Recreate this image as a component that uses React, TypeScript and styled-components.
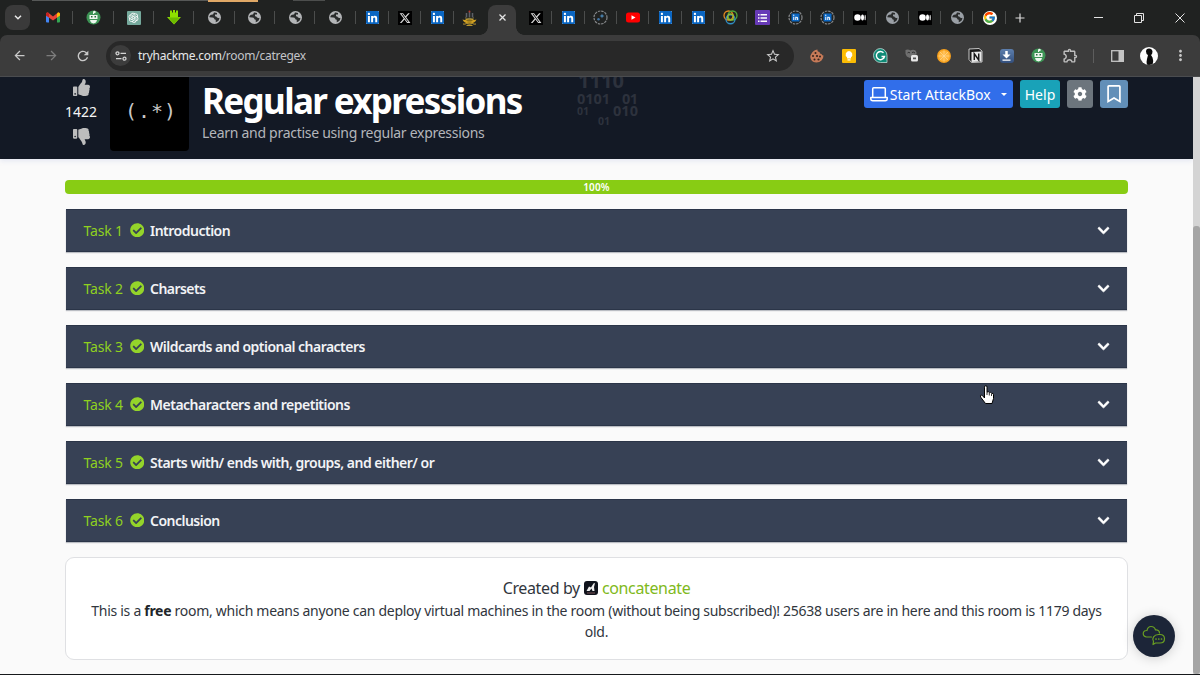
import React from "react";
import styled, { createGlobalStyle } from "styled-components";
import { FaThumbsUp, FaThumbsDown, FaCog, FaCheckCircle, FaChevronDown, FaLinkedin, FaRegBookmark } from "react-icons/fa";
import { FaXTwitter } from "react-icons/fa6";
import { FcGoogle } from "react-icons/fc";
import { AiOutlineOpenAI } from "react-icons/ai";
import { MdOutlineExtension, MdStarOutline, MdArrowBack, MdArrowForward, MdRefresh, MdMoreVert } from "react-icons/md";

const Global = createGlobalStyle`
  * { box-sizing: border-box; }
  html, body { margin: 0; padding: 0; overflow: hidden; background: #17191c; }
  body { font-family: "Noto Sans", "Open Sans", sans-serif; }
  svg { display: block; flex: none; }
`;

const Window = styled.div`
  width: 1200px;
  height: 675px;
  display: flex;
  flex-direction: column;
  background: #202221;
  border-bottom: 1px solid #17191c;
  overflow: hidden;
`;

/* ---------- browser chrome ---------- */

const BackEdge = styled.div`
  height: 2px;
  display: flex;
  flex: none;
`;

const EdgePiece = styled.div<{ $w: number; $c: string }>`
  width: ${(p) => p.$w}px;
  height: ${(p) => (p.$c === "#e0a866" ? 2 : 1)}px;
  background: ${(p) => p.$c};
`;

const TabStrip = styled.div`
  height: 33px;
  flex: none;
  display: flex;
  align-items: stretch;
  padding-left: 5px;
`;

const TabSearch = styled.div`
  width: 25px;
  height: 25px;
  margin: 3px 3px 0 0;
  border-radius: 8px;
  background: #3a3a3a;
  display: flex;
  align-items: center;
  justify-content: center;
`;

const TabGroup = styled.div<{ $shift?: number }>`
  display: flex;
  margin-left: ${(p) => p.$shift ?? 0}px;
`;

const Tab = styled.div<{ $wide?: boolean; $line?: boolean }>`
  width: ${(p) => (p.$wide ? 40.35 : 32.4)}px;
  height: 31px;
  flex: none;
  display: flex;
  align-items: center;
  justify-content: center;
  position: relative;
  &::after {
    content: "";
    display: ${(p) => (p.$line === false ? "none" : "block")};
    position: absolute;
    right: 0;
    top: 9px;
    width: 1px;
    height: 13px;
    background: #4b4d4c;
  }
`;

const ActiveTab = styled.div`
  width: 28px;
  height: 30px;
  margin: 3px 2.8px 0 2.2px;
  flex: none;
  border-radius: 8px 8px 0 0;
  background: #3c3c3c;
  display: flex;
  justify-content: center;
  padding-top: 8px;
  position: relative;
  &::before,
  &::after {
    content: "";
    position: absolute;
    bottom: 0;
    width: 8px;
    height: 8px;
  }
  &::before {
    left: -8px;
    background: radial-gradient(circle at 0 0, transparent 7.5px, #3c3c3c 8px);
  }
  &::after {
    right: -8px;
    background: radial-gradient(circle at 100% 0, transparent 7.5px, #3c3c3c 8px);
  }
`;

const Tile = styled.div<{ $bg: string; $size?: number; $r?: number }>`
  width: ${(p) => p.$size ?? 14}px;
  height: ${(p) => p.$size ?? 14}px;
  border-radius: ${(p) => p.$r ?? 0}px;
  background: ${(p) => p.$bg};
  color: #fff;
  display: flex;
  align-items: center;
  justify-content: center;
  overflow: hidden;
`;

const NewTab = styled.div`
  width: 28px;
  height: 31px;
  display: flex;
  align-items: center;
  justify-content: center;
`;

const WindowButtons = styled.div`
  margin-left: auto;
  display: flex;
  height: 31px;
`;

const WindowButton = styled.div`
  width: 40.5px;
  display: flex;
  align-items: center;
  justify-content: center;
`;

const Toolbar = styled.div`
  height: 42px;
  flex: none;
  display: flex;
  align-items: center;
  padding: 0 3px 0 4px;
  background: #3c3c3c;
  border-radius: 7px 7px 0 0;
  border-bottom: 1px solid #4a4b4c;
`;

const NavButton = styled.div<{ $dim?: boolean }>`
  width: 31.5px;
  display: flex;
  justify-content: center;
  color: ${(p) => (p.$dim ? "#7d7d7d" : "#c9c9c9")};
`;

const Omnibox = styled.div`
  width: 688px;
  height: 30px;
  margin: 0 7px 0 7.5px;
  border-radius: 15px;
  background: #282828;
  display: flex;
  align-items: center;
  padding: 0 13px 0 4px;
`;

const SiteInfo = styled.div`
  width: 21px;
  height: 21px;
  border-radius: 50%;
  background: #3c3c3c;
  display: flex;
  align-items: center;
  justify-content: center;
`;

const Url = styled.div`
  flex: 1;
  margin-left: 7px;
  font-size: 12px;
  line-height: 16px;
  letter-spacing: -0.27px;
  color: #c3c5c8;
  b { font-weight: 400; color: #e6e7e9; }
`;

const Extension = styled.div`
  width: 31.7px;
  display: flex;
  align-items: center;
  justify-content: center;
`;

const ToolbarLine = styled.div`
  width: 1px;
  height: 14px;
  margin: 0 7px;
  background: #5d5d5d;
`;

const Avatar = styled(Tile)`
  align-items: flex-end;
`;

/* ---------- page ---------- */

const Viewport = styled.div`
  flex: 1;
  min-height: 0;
  display: flex;
  background: #fafafa;
`;

const Page = styled.div`
  width: 1193px;
  display: flex;
  flex-direction: column;
`;

const Scrollbar = styled.div`
  width: 7px;
  background: #d4d4d4;
  padding-top: 149px;
`;

const Thumb = styled.div`
  height: 448px;
  border-radius: 3px;
  background: #a5a5a5;
`;

const RoomHeader = styled.header`
  height: 82px;
  flex: none;
  display: flex;
  align-items: flex-start;
  padding: 0 65px 0 65px;
  background: #131925;
  box-shadow: 0 2px 5px rgba(110, 130, 200, 0.15);
`;

const Votes = styled.div`
  width: 32px;
  padding-top: 2px;
  display: flex;
  flex-direction: column;
  align-items: center;
  color: #bdbdbd;
`;

const VoteCount = styled.div`
  font-size: 14px;
  line-height: 19px;
  margin: 6px 0 7px;
  color: #f5f5f5;
`;

const RoomLogo = styled.div`
  width: 79px;
  height: 74px;
  margin-left: 13px;
  padding-left: 3px;
  border-radius: 0 0 4px 4px;
  background: #000;
  color: #c8c8c8;
  font: 20px/68px "DejaVu Sans Mono", monospace;
  letter-spacing: 1px;
  text-align: center;
`;

const Heading = styled.div`
  width: 360px;
  margin-left: 13px;
`;

const Title = styled.h1`
  margin: 0;
  padding-top: 2px;
  font-size: 35px;
  line-height: 44px;
  font-weight: 700;
  letter-spacing: -1.65px;
  white-space: nowrap;
  color: #fff;
`;

const Subtitle = styled.div`
  font-size: 14px;
  line-height: 20px;
  letter-spacing: -0.28px;
  white-space: nowrap;
  color: #b3b6bb;
`;

const Binary = styled.svg`
  margin-left: 13px;
  font-family: "Open Sans", sans-serif;
  font-weight: 700;
  fill: #2d323d;
`;

const Actions = styled.div`
  margin-left: auto;
  padding-top: 3px;
  display: flex;
  gap: 7px;
`;

const Action = styled.button<{ $bg: string; $w: number }>`
  width: ${(p) => p.$w}px;
  height: 28px;
  border: 0;
  padding: 0;
  border-radius: 3px;
  background: ${(p) => p.$bg};
  color: #fff;
  font-family: inherit;
  font-size: 14px;
  display: flex;
  align-items: center;
  justify-content: center;
  gap: 2px;
`;

const Caret = styled.span`
  margin-left: 8px;
  border: 3.5px solid transparent;
  border-top-color: #fff;
  border-bottom: 0;
`;

const Content = styled.main`
  padding: 21px 65px 0;
  display: flex;
  flex-direction: column;
`;

const Progress = styled.div`
  height: 14px;
  margin-bottom: 15px;
  border-radius: 4px;
  background: #88cc14;
  color: #fff;
  font-size: 10px;
  line-height: 14px;
  font-weight: 600;
  letter-spacing: 0.15px;
  text-align: center;
`;

const Task = styled.section`
  height: 43px;
  margin: 0 1px 15px;
  padding: 0 17px 1px 17.5px;
  display: flex;
  align-items: center;
  background: #374155;
  border: 1px solid #2b3548;
  border-left: 0;
  border-right: 0;
  box-shadow: 0 1px 1px rgba(40, 50, 70, 0.3);
  font-size: 14px;
`;

const TaskNumber = styled.span`
  width: 46px;
  white-space: nowrap;
  letter-spacing: -0.15px;
  color: #8fd01f;
`;

const TaskTitle = styled.span<{ $track: number }>`
  flex: 1;
  margin-left: 6px;
  font-weight: 600;
  letter-spacing: ${(p) => p.$track}px;
  color: #f2f3f6;
`;

const Chevron = styled(FaChevronDown)`
  color: #fff;
  stroke: #fff;
  stroke-width: 24px;
`;

const Credits = styled.section`
  height: 103px;
  padding-top: 19px;
  background: #fff;
  border: 1px solid #dfe0e3;
  border-radius: 9px;
  text-align: center;
  color: #31363d;
`;

const Creator = styled.div`
  display: flex;
  align-items: center;
  justify-content: center;
  gap: 4px;
  margin-bottom: 1px;
  font-size: 16px;
  line-height: 22px;
  letter-spacing: -0.36px;
`;

const CreatorLink = styled.a`
  color: #7fb920;
`;

const CreditLine = styled.div<{ $track: number }>`
  font-size: 14px;
  line-height: 21px;
  white-space: nowrap;
  letter-spacing: ${(p) => p.$track}px;
  b { color: #212529; }
`;

const ChatButton = styled.div`
  position: absolute;
  left: 1133px;
  top: 614.5px;
  width: 42px;
  height: 42px;
  border-radius: 50%;
  background: #1c2538;
  box-shadow: 0 1px 12px rgba(0, 0, 0, 0.18);
  display: flex;
  align-items: center;
  justify-content: center;
`;

const Pointer = styled.svg`
  position: absolute;
  left: 978.5px;
  top: 385px;
`;

/* ---------- drawings ---------- */

const Gmail = () => (
  <svg width="14" height="11" viewBox="0 0 28 22">
    <path d="M0 3v16q0 2 2 2h4V8L0 3z" fill="#4285f4" />
    <path d="M28 3v16q0 2-2 2h-4V8l6-5z" fill="#34a853" />
    <path d="M0 4Q0 0 4 1l10 8L24 1q4-1 4 3v3L14 17 0 7z" fill="#ea4335" />
    <path d="M22 3l2-2q4-1 4 3v3l-6 4z" fill="#fbbc04" />
    <path d="M6 3L4 1Q0 0 0 4v3l6 4z" fill="#c5221f" />
  </svg>
);

const Robot = () => (
  <svg width="15" height="15" viewBox="0 0 30 30">
    <circle cx="15" cy="15" r="14" fill="#3d9455" />
    <path d="M14 3h2v5h-2zM7 10h16v8H7zM8 20h14q-1 6-7 7-6-1-7-7z" fill="#eef6ee" />
    <path d="M10 12h3v3h-3zM17 12h3v3h-3z" fill="#246b3a" />
    <circle cx="17" cy="4" r="2.4" fill="#eef6ee" />
  </svg>
);

const GreenArrow = () => (
  <svg width="14" height="15" viewBox="0 0 28 30">
    <path d="M6 1h4v4h2V0h4v5h2V1h4v13h6L14 29 0 14h6z" fill="#8ee000" />
    <path d="M3 15h22L14 28z" fill="#6dbb00" />
  </svg>
);

const Globe = ({ c = "#b4b6b8" }: { c?: string }) => (
  <svg width="13" height="13" viewBox="0 0 26 26">
    <circle cx="13" cy="13" r="13" fill={c} />
    <path d="M2.500 12.500q4 0 6 .5 3 0 4 2.500 0 2 3 2v5q7-2 7.500-9-3 1-5-.5-1-2.500-4-2.500V7h4V4q-3-1.600-6-1l-2 4H8.500L5 8q-2.300 2-2.500 4.500z" fill="#2a2c2c" />
    <path d="M10 18.500l2 4.500q-6 0-8.500-6z" fill={c} />
  </svg>
);

const Linked = () => (
  <Tile $bg="#fff" $size={13} $r={1}>
    <FaLinkedin size={15} color="#0a66c2" />
  </Tile>
);

const XMark = () => (
  <Tile $bg="#000">
    <FaXTwitter size={12} color="#d9d9d9" />
  </Tile>
);

const Ship = () => (
  <svg width="15" height="16" viewBox="0 0 30 32">
    <path d="M9 6v9M15 4v10M21 6v9" stroke="#5c6068" strokeWidth="3" />
    <circle cx="15" cy="3" r="2" fill="#b5382e" />
    <path d="M6 13l3 4 6-2 6 2 3-4-2 7H8z" fill="#8b7c3c" />
    <path d="M1 19q6 2 7-1l7 2 7-2q1 3 7 1-3 8-14 8T1 19z" fill="#d1a021" />
    <path d="M9 21h12M11 24h8" stroke="#5a4a14" strokeWidth="1.200" />
    <path d="M2 28q4 1 7-1 6 3 12 0 3 2 7 1M9 31h12" stroke="#e1b431" strokeWidth="1.600" fill="none" />
  </svg>
);

const Ring = ({ children }: { children: React.ReactNode }) => (
  <svg width="15" height="15" viewBox="0 0 30 30">
    <circle cx="15" cy="15" r="13" fill="none" stroke="#858789" strokeWidth="2.400" strokeDasharray="5 1.800" />
    {children}
  </svg>
);

const RingedLinked = () => (
  <Ring>
    <rect x="7" y="7" width="16" height="16" rx="1.500" fill="#0a66c2" />
    <path d="M11.500 13.500V20M15.500 20v-6.500M15.500 17q.5-2.500 2-2.500t1.700 2V20" stroke="#eaf2fa" strokeWidth="2.200" fill="none" />
    <circle cx="11.500" cy="10.500" r="1.400" fill="#eaf2fa" />
  </Ring>
);

const Spark = () => (
  <Ring>
    <path d="M18 7l1.300 3.700L23 12l-3.700 1.300L18 17l-1.300-3.700L13 12l3.700-1.300z" fill="#4d87b5" />
    <circle cx="11" cy="18.500" r="2.500" fill="#3f74a5" />
  </Ring>
);

const YouTube = () => (
  <svg width="14" height="11" viewBox="0 0 28 22">
    <rect y="1" width="28" height="20" rx="5" fill="#f00" />
    <path d="M11 6.500l8 4.500-8 4.500z" fill="#fff" />
  </svg>
);

const Rings = () => (
  <svg width="15" height="15" viewBox="0 0 30 30" fill="none" strokeWidth="2.600">
    <circle cx="11" cy="11" r="9" stroke="#e58a1f" />
    <circle cx="19" cy="11" r="9" stroke="#4fa83a" />
    <circle cx="15" cy="18.500" r="9" stroke="#2f8fc4" />
    <circle cx="15" cy="14" r="6" stroke="#9fb832" />
  </svg>
);

const FormList = () => (
  <Tile $bg="#673ab7" $size={15} $r={1}>
    <svg width="9" height="8" viewBox="0 0 9 8" fill="#fff">
      <path d="M0 0h1.500v1.500H0zM2.500 0H9v1.500H2.500zM0 3.200h1.500v1.500H0zM2.500 3.200H9v1.500H2.500zM0 6.400h1.500v1.500H0zM2.500 6.400H9v1.500H2.500z" />
    </svg>
  </Tile>
);

const Medium = () => (
  <Tile $bg="#000">
    <svg width="12" height="7" viewBox="0 0 24 14" fill="#fff">
      <circle cx="7" cy="7" r="6.500" />
      <ellipse cx="17" cy="7" rx="3" ry="6" />
      <ellipse cx="22.300" cy="7" rx="1.200" ry="5.500" />
    </svg>
  </Tile>
);

const Google = () => (
  <Tile $bg="#fff" $r={7}>
    <FcGoogle size={13} />
  </Tile>
);

const Cookie = () => (
  <svg width="14" height="14" viewBox="0 0 28 28">
    <path d="M15 1q-1 5 4 5 0 4 4 4 1 3 4 3 0 6-4 10T13 27Q5 27 2 21T2 11Q6 2 15 1z" fill="#c67a58" />
    <g fill="#33231d">
      <circle cx="11" cy="8" r="2" /><circle cx="6" cy="14" r="2" /><circle cx="14" cy="14" r="2.200" />
      <circle cx="9" cy="21" r="2" /><circle cx="20" cy="15" r="2" /><circle cx="17" cy="21" r="2.200" />
    </g>
  </svg>
);

const Bulb = () => (
  <Tile $bg="#fbbc04" $r={1}>
    <svg width="8" height="10" viewBox="0 0 16 20" fill="#fff">
      <path d="M8 0a7 7 0 0 1 4 12.500V15H4v-2.500A7 7 0 0 1 8 0zM5 16.500h6V19H5z" />
    </svg>
  </Tile>
);

const Grammar = () => (
  <svg width="15" height="15" viewBox="0 0 30 30">
    <path d="M15 1a14 14 0 1 0 0 28h13V15A14 14 0 0 0 15 1z" fill="#0f8a76" stroke="#c7e2dd" strokeWidth="1.500" />
    <path d="M21 9.500A8.200 8.200 0 1 0 23 17h-6" fill="none" stroke="#fff" strokeWidth="2.800" />
  </svg>
);

const GreyMask = () => (
  <svg width="13" height="13" viewBox="0 0 26 26">
    <path d="M1 2q5-2 10 1 5-3 10 0 3 3 2 8l-8 3-5 4q-8-2-9-9z" fill="#707070" />
    <path d="M5 8q3-3 5 0M14 7q3-2 6 1" stroke="#303030" strokeWidth="2" fill="none" />
    <rect x="12" y="12" width="14" height="13" rx="3" fill="#e8e8e8" />
    <rect x="16" y="17" width="6" height="3.500" fill="#555" />
  </svg>
);

const Orange = () => (
  <svg width="14" height="14" viewBox="0 0 28 28">
    <circle cx="14" cy="14" r="14" fill="#f7a01d" />
    <circle cx="14" cy="14" r="11" fill="#ffb63f" />
    <path d="M14 3v22M3 14h22M6 6l16 16M22 6L6 22" stroke="#ffdb9b" strokeWidth="1.300" />
  </svg>
);

const Notion = () => (
  <svg width="15" height="15" viewBox="0 0 30 30">
    <path d="M2 2l20-1 6 5v22l-21 1-5-6z" fill="#1a1a1a" stroke="#d8d8d8" strokeWidth="1.800" />
    <path d="M7 8l20-1v20L7 28z" fill="#e9e9e9" />
    <path d="M12.500 24V11.500L21.500 24V11" fill="none" stroke="#161616" strokeWidth="2.800" />
  </svg>
);

const Download = () => (
  <Tile $bg="linear-gradient(#5d7fae, #334f7d)" $r={3}>
    <svg width="9" height="10" viewBox="0 0 18 20" fill="#fff">
      <path d="M6.500 0h5v7H17l-8 8-8-8h5.500zM1 17h16v2.500H1z" />
    </svg>
  </Tile>
);

const Laptop = () => (
  <svg width="18" height="15" viewBox="0 0 18 15" fill="none" stroke="#fff" strokeWidth="1.500" strokeLinejoin="round">
    <path d="M2.700 10V1.800q0-1 1-1h10.600q1 0 1 1V10" />
    <path d="M.8 10.400h16.400v1.400q0 2-2 2H2.800q-2 0-2-2z" />
  </svg>
);

const CloudChat = () => (
  <svg width="24" height="22" viewBox="0 0 48 44" fill="none" stroke="#6a9f22" strokeWidth="2.400" strokeLinejoin="round" strokeLinecap="round">
    <path d="M19 24H9a6.500 6.500 0 0 1 0-13 1 1 0 0 1 1 0C11 5 15 3 18 3c5 0 8 3 9 7 4-1 8 2 8 6" />
    <path d="M22 39l1-6c-4-6 1-14 10-14h3c12 0 12 17 0 17h-9z" />
    <path d="M28 28h.1M33.500 28h.1M39 28h.1" strokeWidth="3.400" />
  </svg>
);

const wideTabs = [<Gmail />, <Robot />, <Tile $bg="#75a99c" $r={1}><AiOutlineOpenAI size={13} /></Tile>, <GreenArrow />, <Globe />, <Globe />, <Globe />, <Globe />];
const leftTabs = [<Linked />, <XMark />, <Linked />, <Ship />];
const rightTabs = [
  <XMark />, <Linked />, <Spark />, <YouTube />, <Linked />, <Linked />, <Rings />, <FormList />,
  <RingedLinked />, <RingedLinked />, <Medium />, <Globe c="#9aa0a6" />, <Medium />, <Globe c="#9aa0a6" />, <Google />,
];

const extensions = [
  <Cookie />, <Bulb />, <Grammar />, <GreyMask />, <Orange />, <Notion />, <Download />, <Robot />,
  <MdOutlineExtension size={17} color="#bdbdbd" />,
];

const tasks: [string, number][] = [
  ["Introduction", -0.5],
  ["Charsets", -0.55],
  ["Wildcards and optional characters", -0.53],
  ["Metacharacters and repetitions", -0.5],
  ["Starts with/ ends with, groups, and either/ or", -0.5],
  ["Conclusion", -0.52],
];

export default function App() {
  return (
    <Window>
      <Global />
      <BackEdge>
        <EdgePiece $w={32} $c="#202221" />
        <EdgePiece $w={176} $c="#565857" />
        <EdgePiece $w={50} $c="#e0a866" />
        <EdgePiece $w={35} $c="#202221" />
        <EdgePiece $w={32} $c="#4c4e4d" />
      </BackEdge>
      <TabStrip>
        <TabSearch>
          <svg width="8" height="5" viewBox="0 0 8 5"><path d="M1 .7l3 3 3-3" stroke="#e8e8e8" strokeWidth="1.500" fill="none" /></svg>
        </TabSearch>
        <TabGroup>{wideTabs.map((icon, i) => <Tab key={i} $wide>{icon}</Tab>)}</TabGroup>
        <TabGroup $shift={0.8}>{leftTabs.map((icon, i) => <Tab key={i} $line={i < 3}>{icon}</Tab>)}</TabGroup>
        <ActiveTab>
          <svg width="9" height="9" viewBox="0 0 9 9"><path d="M1.500 1.500l6 6m0-6l-6 6" stroke="#e3e3e3" strokeWidth="1.300" /></svg>
        </ActiveTab>
        <TabGroup $shift={0.8}>{rightTabs.map((icon, i) => <Tab key={i}>{icon}</Tab>)}</TabGroup>
        <NewTab>
          <svg width="10" height="10" viewBox="0 0 10 10"><path d="M5 .5v9M.5 5h9" stroke="#dcdcdc" strokeWidth="1.200" /></svg>
        </NewTab>
        <WindowButtons>
          <WindowButton><svg width="9" height="9"><path d="M0 4.500h9" stroke="#e3e3e3" /></svg></WindowButton>
          <WindowButton><svg width="10" height="10" fill="none" stroke="#e3e3e3"><path d="M.5 2.500h7v7h-7zM2.500 2.500v-2h7v7h-2" /></svg></WindowButton>
          <WindowButton><svg width="10" height="10"><path d="M.5.5l9 9m0-9l-9 9" stroke="#e3e3e3" /></svg></WindowButton>
        </WindowButtons>
      </TabStrip>
      <Toolbar>
        <NavButton><MdArrowBack size={15} /></NavButton>
        <NavButton $dim><MdArrowForward size={15} /></NavButton>
        <NavButton><MdRefresh size={16} /></NavButton>
        <Omnibox>
          <SiteInfo>
            <svg width="12" height="10" viewBox="0 0 12 10" fill="none" stroke="#d5d5d5" strokeWidth="1.300">
              <circle cx="2.500" cy="2.300" r="1.500" /><path d="M5.500 2.300H11M1 7.700h5.500" /><circle cx="9.500" cy="7.700" r="1.500" />
            </svg>
          </SiteInfo>
          <Url><b>tryhackme.com</b>/room/catregex</Url>
          <MdStarOutline size={16} color="#c9c9c9" />
        </Omnibox>
        {extensions.map((icon, i) => <Extension key={i}>{icon}</Extension>)}
        <ToolbarLine />
        <Extension>
          <svg width="13" height="12" viewBox="0 0 13 12"><rect x=".7" y=".7" width="11.600" height="10.600" fill="none" stroke="#c4c4c4" strokeWidth="1.300" /><path d="M7.500 0H13v12H7.500z" fill="#c4c4c4" /></svg>
        </Extension>
        <Extension>
          <Avatar $bg="#fff" $size={18} $r={9}>
            <svg width="18" height="18" viewBox="0 0 36 36"><path d="M12 9q0-6 6-6t7 6q0 5-3 7l3 5q3 7 0 15H14q-2-5 0-12l2-8q-4-2-4-7z" fill="#0c0c0c" /></svg>
          </Avatar>
        </Extension>
        <Extension><MdMoreVert size={17} color="#c9c9c9" /></Extension>
      </Toolbar>

      <Viewport>
        <Page>
          <RoomHeader>
            <Votes>
              <FaThumbsUp size={17} />
              <VoteCount>1422</VoteCount>
              <FaThumbsDown size={17} />
            </Votes>
            <RoomLogo>(.*)</RoomLogo>
            <Heading>
              <Title>Regular expressions</Title>
              <Subtitle>Learn and practise using regular expressions</Subtitle>
            </Heading>
            <Binary width="66" height="52">
              <text x="3" y="11" fontSize="20" textLength="46">1110</text>
              <text x="2" y="26.500" fontSize="14.500" textLength="33">0101</text>
              <text x="47" y="26.500" fontSize="14.500" textLength="16">01</text>
              <text x="2" y="38" fontSize="10.500" textLength="12">01</text>
              <text x="38" y="38.500" fontSize="14.500" textLength="25">010</text>
              <text x="23" y="48" fontSize="10.500" textLength="12">01</text>
            </Binary>
            <Actions>
              <Action $bg="#316eea" $w={149.5}><Laptop />Start AttackBox<Caret /></Action>
              <Action $bg="#19a2b8" $w={40}>Help</Action>
              <Action $bg="#6c757d" $w={26}><FaCog size={14} /></Action>
              <Action $bg="#628fb8" $w={28}><FaRegBookmark size={18} /></Action>
            </Actions>
          </RoomHeader>
          <Content>
            <Progress>100%</Progress>
            {tasks.map(([name, track], i) => (
              <Task key={name}>
                <TaskNumber>Task {i + 1}</TaskNumber>
                <FaCheckCircle size={14.5} color="#94d42a" />
                <TaskTitle $track={track}>{name}</TaskTitle>
                <Chevron size={13} />
              </Task>
            ))}
            <Credits>
              <Creator>
                Created by
                <svg width="14" height="14" viewBox="0 0 28 28"><rect width="28" height="28" rx="6" fill="#10131c" /><path d="M5 20l5-9 4 2 5-8 3-1-2 8 1 8h-4l-2-5-4 5z" fill="#eee" /><path d="M6 24h16" stroke="#7b5555" strokeWidth="2" /></svg>
                <CreatorLink>concatenate</CreatorLink>
              </Creator>
              <CreditLine $track={-0.288}>This is a <b>free</b> room, which means anyone can deploy virtual machines in the room (without being subscribed)! 25638 users are in here and this room is 1179 days</CreditLine>
              <CreditLine $track={-0.288}>old.</CreditLine>
            </Credits>
          </Content>
        </Page>
        <Scrollbar><Thumb /></Scrollbar>
      </Viewport>

      <ChatButton><CloudChat /></ChatButton>
      <Pointer width="16" height="20" viewBox="0 0 16 20">
        <path d="M5.500 12V2.200q0-1.500 1.300-1.500T8 2.200V7q1.600-.8 2.300.6 1.500-.7 2.200.7 2-.4 2 1.500v3.700L13 18.500H6.500L2 12.600q-1.500-2 .2-2.600 1.300 0 3.300 3z" fill="#fff" stroke="#000" strokeWidth="1" strokeLinejoin="round" />
        <path d="M8 7v3M10.300 8v2.500M12.500 9v2" stroke="#000" strokeWidth=".8" />
      </Pointer>
    </Window>
  );
}
